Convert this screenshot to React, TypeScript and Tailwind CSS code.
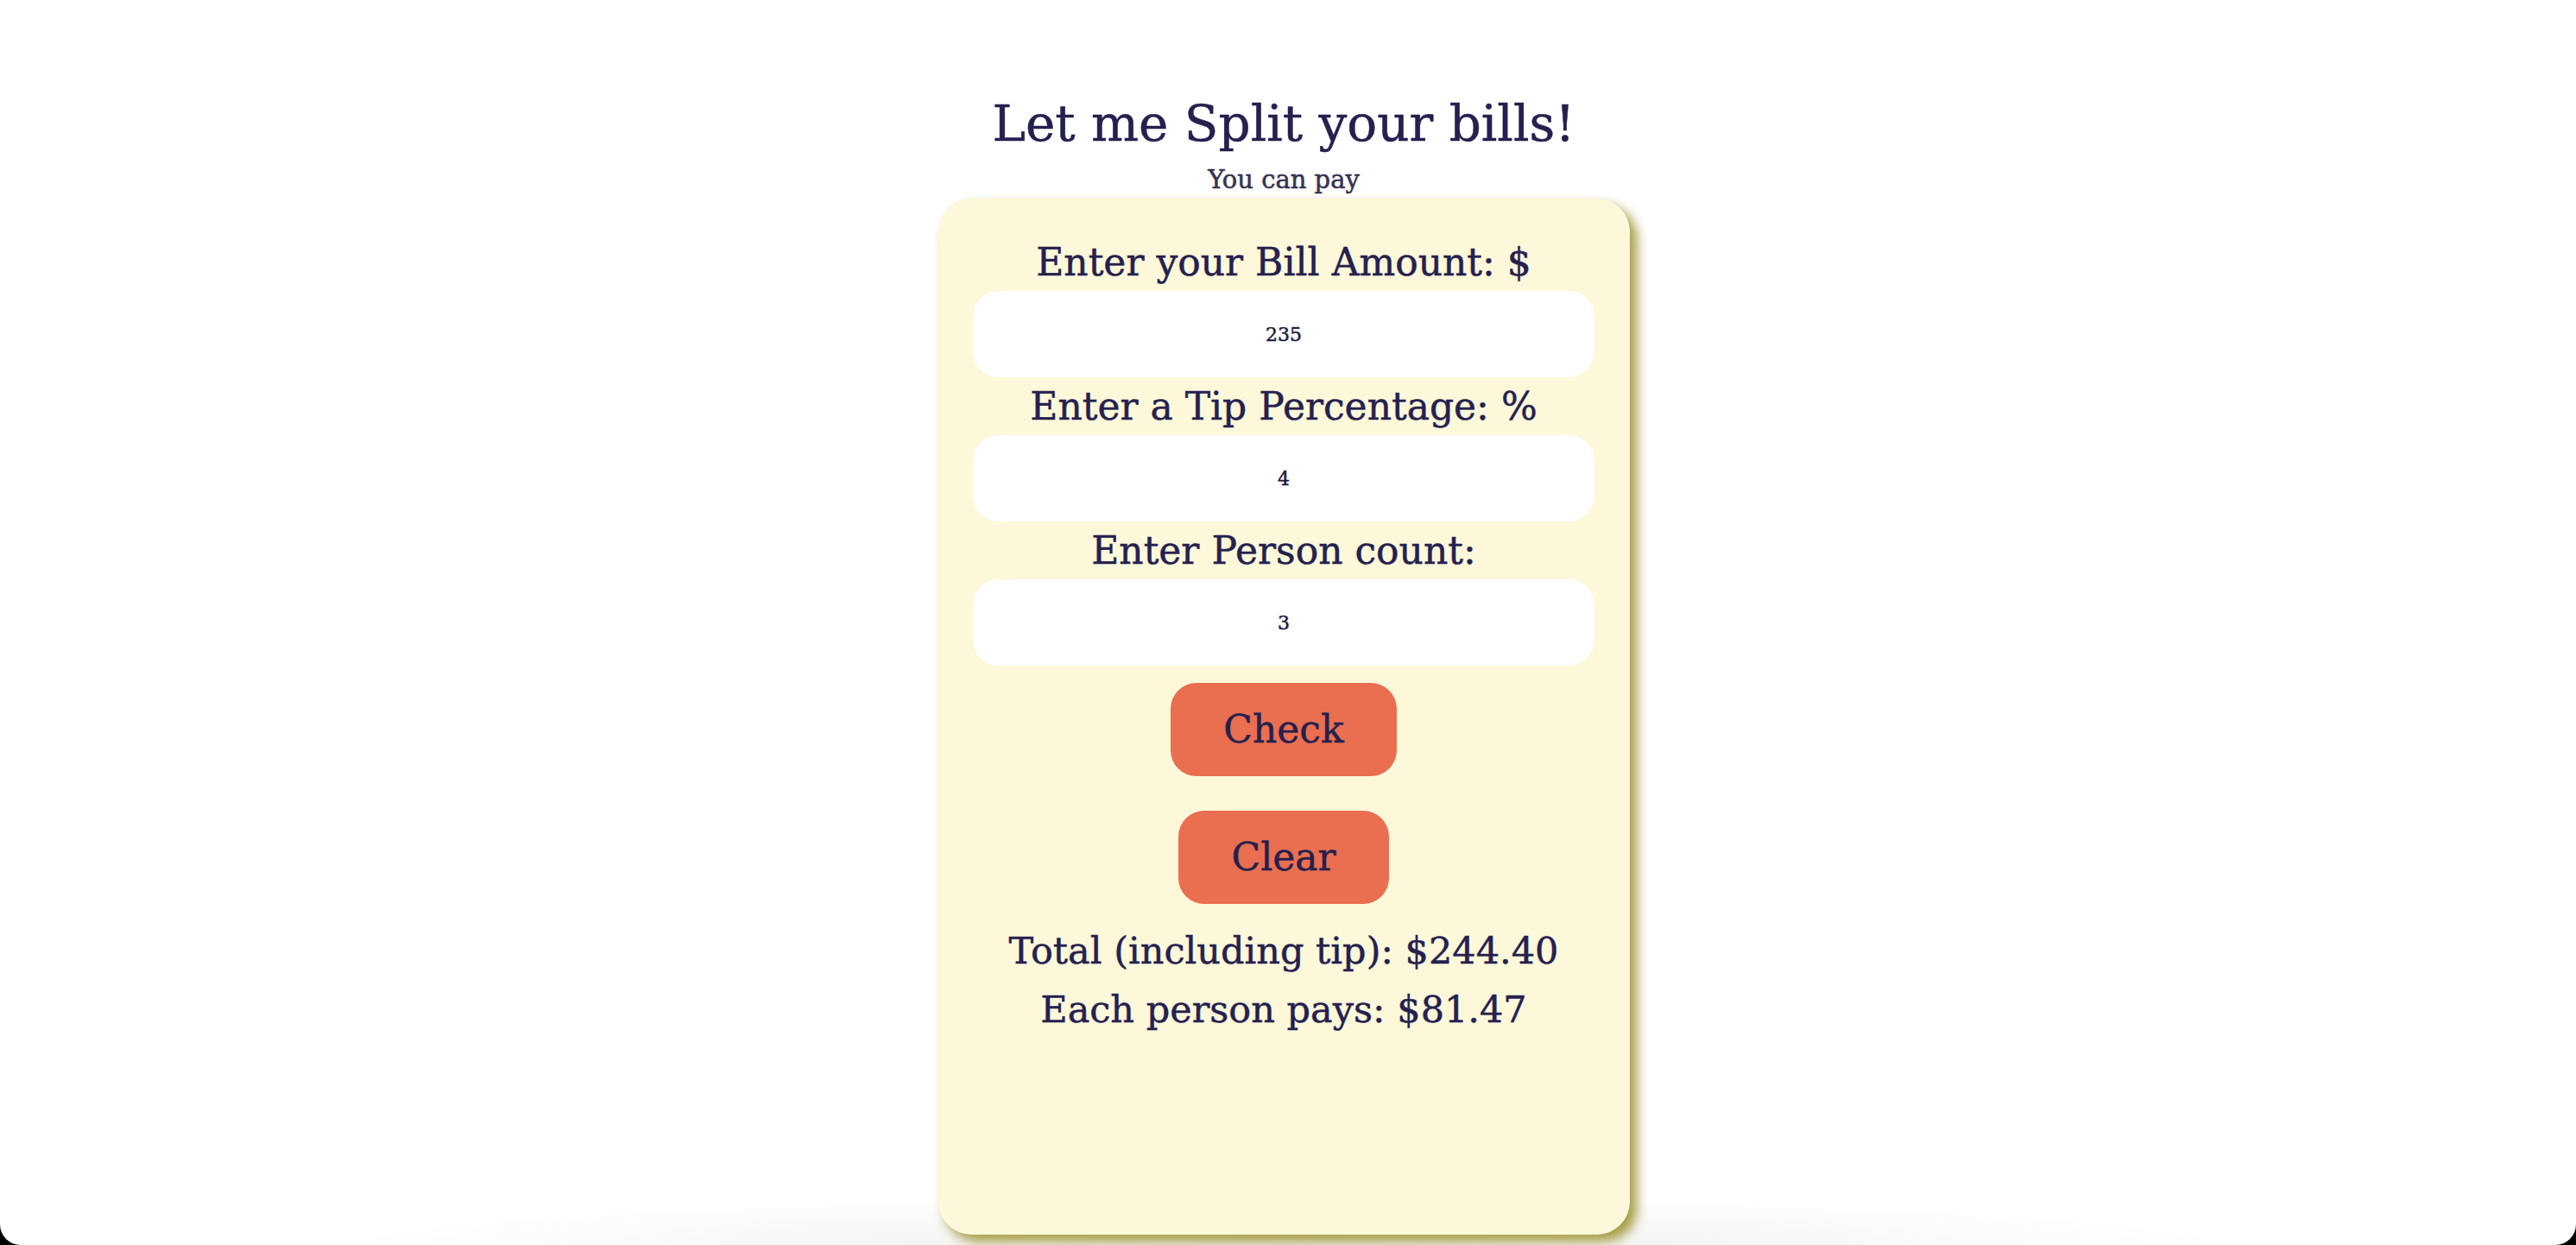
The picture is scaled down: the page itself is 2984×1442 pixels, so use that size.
import { useState } from "react";

// totals for the bill splitter, rounded to cents
function split(bill: string, tip: string, people: string) {
  const amount = parseFloat(bill);
  const pct = parseFloat(tip);
  const count = parseInt(people, 10);
  if (isNaN(amount) || isNaN(pct) || isNaN(count) || count <= 0) return null;
  const total = amount * (1 + pct / 100);
  return { total, each: total / count };
}

function Field({
  label,
  value,
  onChange,
}: {
  label: string;
  value: string;
  onChange: (v: string) => void;
}) {
  return (
    <>
      <label className="block text-center text-[44px] leading-[67px] whitespace-nowrap">{label}</label>
      <input
        type="text"
        value={value}
        onChange={(e) => onChange(e.target.value)}
        className="block w-[720px] h-[100px] rounded-[30px] bg-white text-center text-[22px] text-[#1d1b2e] outline-none font-['DejaVu_Serif',serif]"
      />
    </>
  );
}

function App() {
  const [bill, setBill] = useState("235");
  const [tip, setTip] = useState("4");
  const [people, setPeople] = useState("3");
  const [result, setResult] = useState(split("235", "4", "3"));

  return (
    <div className="bg-black">
      <div className="h-[1442px] rounded-b-[24px] bg-white bg-[radial-gradient(ellipse_1100px_55px_at_50%_100%,#efefef,#ffffff)] flex flex-col items-center pt-[109px] pr-[10px] text-[#25214f] [-webkit-text-stroke:0.5px_#25214f] font-['DejaVu_Serif','Liberation_Serif',serif]">
        <h1 className="text-[58px] leading-[68px] font-normal">Let me Split your bills!</h1>
        <p className="mt-[14px] text-[29px] leading-[34px] text-[#3a3650]">You can pay</p>

        <div className="mt-[5px] w-[801px] h-[1200px] rounded-[38px] bg-[#fdf8da] shadow-[8px_8px_14px_#a39b40] flex flex-col items-center pt-[40px]">
          <Field label="Enter your Bill Amount: $" value={bill} onChange={setBill} />
          <Field label="Enter a Tip Percentage: %" value={tip} onChange={setTip} />
          <Field label="Enter Person count:" value={people} onChange={setPeople} />

          <button
            onClick={() => setResult(split(bill, tip, people))}
            className="mt-[20px] mb-[20px] px-[61px] py-[21px] rounded-[30px] bg-[#ea6e50] text-[44px] leading-[66px]"
          >
            Check
          </button>
          <button
            onClick={() => {
              setBill("");
              setTip("");
              setPeople("");
              setResult(null);
            }}
            className="mt-[20px] mb-[20px] px-[61px] py-[21px] rounded-[30px] bg-[#ea6e50] text-[44px] leading-[66px]"
          >
            Clear
          </button>

          {result && (
            <div className="text-center text-[43px] leading-[68px]">
              <p>Total (including tip): ${result.total.toFixed(2)}</p>
              <p>Each person pays: ${result.each.toFixed(2)}</p>
            </div>
          )}
        </div>
      </div>
    </div>
  );
}

export default App;
